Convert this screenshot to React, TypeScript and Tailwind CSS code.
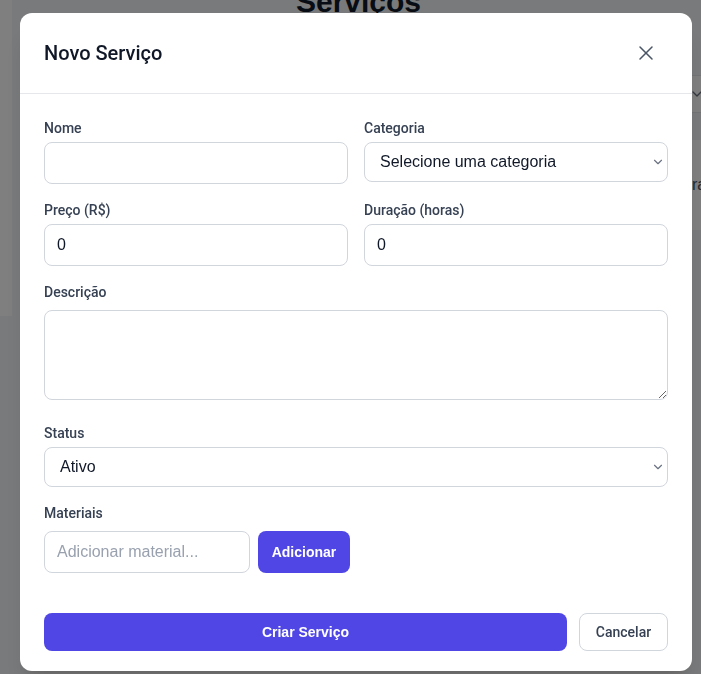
import { ChevronDown, X } from "lucide-react";

const inputClass =
  "w-full rounded-lg border border-gray-300 bg-white px-3 py-2 text-base leading-6 text-gray-900 outline-none placeholder:text-gray-400";

const Label = ({ text, wide }: { text: string; wide?: boolean }) => (
  <label className={`block font-['Roboto',Arial,sans-serif] text-sm font-medium text-gray-700 ${wide ? "mb-2" : "mb-1"}`}>
    {text}
  </label>
);

const SelectBox = ({ options }: { options: string[] }) => (
  <div className="relative">
    <select className="h-10 w-full appearance-none rounded-lg border border-gray-300 bg-white pl-[15px] pr-8 text-base text-gray-900 outline-none">
      {options.map((o) => (
        <option key={o}>{o}</option>
      ))}
    </select>
    <ChevronDown size={14} strokeWidth={2} className="pointer-events-none absolute right-[3px] top-1/2 -translate-y-1/2 text-gray-500" />
  </div>
);

export default function App() {
  return (
    <div className="relative min-h-screen overflow-hidden bg-gray-100 font-['Liberation_Sans',Arial,sans-serif]">
      {/* page behind the dialog */}
      <div className="flex">
        <div className="h-[316px] w-3 shrink-0 bg-white" />
        <div className="flex-1">
          <h1 className="-mt-4 pl-[13px] text-center text-3xl font-bold text-gray-900">Serviços</h1>
        </div>
        <div className="w-[9px] shrink-0 overflow-hidden">
          <div className="mt-[75px] flex h-[38px] items-center border-y border-gray-200 bg-white">
            <ChevronDown size={16} className="-ml-[3px] shrink-0 text-gray-500" />
          </div>
          <div className="mt-[27px] flex h-[90px] items-center bg-white text-gray-600">
            <span className="whitespace-nowrap">ra</span>
          </div>
        </div>
      </div>

      <div className="fixed inset-0 bg-black/50" />

      <div className="fixed left-5 top-[13px] w-[672px] rounded-xl bg-white shadow-xl">
        <div className="flex h-[81px] items-center justify-between border-b border-gray-200 px-6">
          <h2 className="font-['Roboto',Arial,sans-serif] text-xl font-medium text-gray-900">Novo Serviço</h2>
          <button className="mr-[6px] p-1 text-gray-600">
            <X size={24} strokeWidth={1.5} />
          </button>
        </div>

        <form className="px-6 pb-5 pt-6">
          <div className="grid grid-cols-2 gap-4">
            <div>
              <Label text="Nome" />
              <input className={inputClass} />
            </div>
            <div>
              <Label text="Categoria" />
              <SelectBox options={["Selecione uma categoria"]} />
            </div>
            <div>
              <Label text="Preço (R$)" />
              <input className={inputClass} defaultValue="0" />
            </div>
            <div>
              <Label text="Duração (horas)" />
              <input className={inputClass} defaultValue="0" />
            </div>
          </div>

          <div className="mt-4 pb-[7px]">
            <Label text="Descrição" wide />
            <textarea rows={3} className={`${inputClass} block`} />
          </div>

          <div className="mt-4">
            <Label text="Status" />
            <SelectBox options={["Ativo", "Inativo"]} />
          </div>

          <div className="mt-4">
            <Label text="Materiais" wide />
            <div className="flex gap-2">
              <input className={`${inputClass} !w-[206px]`} placeholder="Adicionar material..." />
              <button type="button" className="w-[92px] rounded-lg bg-[#4f46e5] text-sm font-semibold text-white">
                Adicionar
              </button>
            </div>
          </div>

          <div className="mt-10 flex gap-3">
            <button type="button" className="flex-1 rounded-lg border border-transparent bg-[#4f46e5] py-2 text-sm font-semibold text-white">
              Criar Serviço
            </button>
            <button type="button" className="w-[89px] rounded-lg border border-gray-300 bg-white py-2 font-['Roboto',Arial,sans-serif] text-sm font-medium text-gray-700">
              Cancelar
            </button>
          </div>
        </form>
      </div>
    </div>
  );
}
